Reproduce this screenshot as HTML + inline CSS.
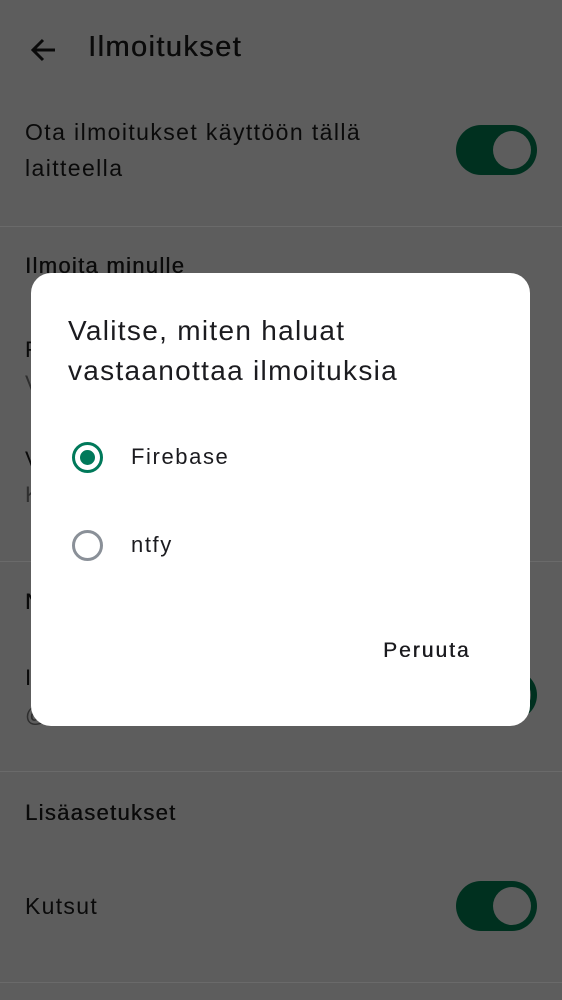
<!DOCTYPE html>
<html><head><meta charset="utf-8"><style>
*{margin:0;padding:0;box-sizing:border-box}
body{width:562px;height:1000px;background:#5d5d5d;position:relative;overflow:hidden;font-family:"Liberation Sans",sans-serif;color:#0a0a0a}
.t{position:absolute;white-space:nowrap}
.m{text-shadow:0.4px 0 0 currentColor}
.div{position:absolute;left:0;width:562px;height:1px;background:#6a6a6a}
.tog{position:absolute;width:81px;height:50px;border-radius:25px;background:#00301f}
.tog::after{content:"";position:absolute;right:6px;top:6px;width:38px;height:38px;border-radius:50%;background:#5d5d5d}
.dlg{position:absolute;left:31px;top:273px;width:499px;height:453px;background:#fff;border-radius:20px}
.r{position:absolute;width:31px;height:31px;border-radius:50%}
</style></head><body>
<svg class="t" style="left:29px;top:37px" width="28" height="26" viewBox="0 0 28 26"><path d="M26 13H4M14 3L4 13l10 10" stroke="#0a0a0a" stroke-width="3" fill="none"/></svg>
<div class="t m" style="left:88px;top:31px;font-size:29px;letter-spacing:1.4px">Ilmoitukset</div>
<div class="t" style="left:25px;top:114px;font-size:23px;line-height:36px;letter-spacing:1.4px">Ota ilmoitukset käyttöön tällä<br>laitteella</div>
<div class="tog" style="left:456px;top:125px"></div>
<div class="div" style="top:226px"></div>
<div class="t m" style="left:25px;top:253px;font-size:22px;letter-spacing:1.3px">Ilmoita minulle</div>
<div class="t" style="left:25px;top:337px;font-size:22px">F</div>
<div class="t" style="left:25px;top:371px;font-size:22px;color:#2e2e2e">V</div>
<div class="t" style="left:25px;top:447px;font-size:22px">V</div>
<div class="t" style="left:25px;top:482px;font-size:22px;color:#2e2e2e">K</div>
<div class="div" style="top:561px"></div>
<div class="t m" style="left:25px;top:589px;font-size:22px">N</div>
<div class="t" style="left:25px;top:665px;font-size:22px">I</div>
<div class="t" style="left:25px;top:702px;font-size:22px;color:#2e2e2e">@</div>
<div class="tog" style="left:456px;top:670px"></div>
<div class="div" style="top:771px"></div>
<div class="t m" style="left:25px;top:800px;font-size:22px;letter-spacing:1.3px">Lisäasetukset</div>
<div class="t" style="left:25px;top:893px;font-size:23px;letter-spacing:1.3px">Kutsut</div>
<div class="tog" style="left:456px;top:881px"></div>
<div class="div" style="top:982px"></div>
<div class="dlg">
<div class="t" style="left:37px;top:38px;font-size:28px;line-height:40px;color:#1b1b1f;letter-spacing:1.3px">Valitse, miten haluat<br>vastaanottaa ilmoituksia</div>
<div class="r" style="left:41px;top:169px;border:3px solid #00795a"><div style="position:absolute;left:5px;top:5px;width:15px;height:15px;border-radius:50%;background:#00795a"></div></div>
<div class="t" style="left:100px;top:171px;font-size:22px;color:#1b1b1f;letter-spacing:1.6px">Firebase</div>
<div class="r" style="left:41px;top:257px;border:3px solid #8a9098"></div>
<div class="t" style="left:100px;top:259px;font-size:22px;color:#1b1b1f;letter-spacing:1.6px">ntfy</div>
<div class="t m" style="left:352px;top:366px;font-size:21px;color:#1b1b1f;letter-spacing:2px">Peruuta</div>
</div>
</body></html>
